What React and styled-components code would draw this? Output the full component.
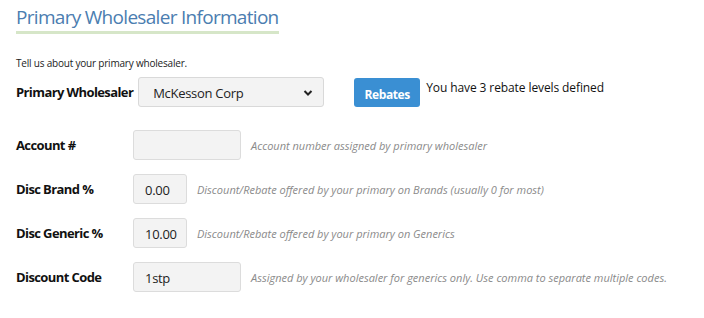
import React, { useState } from "react";
import styled, { createGlobalStyle } from "styled-components";

const GlobalStyle = createGlobalStyle`
    body {
        margin: 0;
        background: #ffffff;
        font-family: "Open Sans", "Liberation Sans", sans-serif;
        color: #111;
    }
`;

const Wrapper = styled.div`
    padding: 4px 16px 0 16px;
    width: 704px;
    height: 318px;
    box-sizing: border-box;
    display: flex;
    flex-direction: column;
`;

const TitleText = styled.h2`
    margin: 0;
    align-self: flex-start;
    font-family: "Open Sans", sans-serif;
    font-size: 19px;
    letter-spacing: -0.7px;
    font-weight: 400;
    color: #4b7db0;
    line-height: 26px;
    padding-bottom: 1px;
    border-bottom: 3px solid #d6e6c8;
`;

const IntroText = styled.p`
    margin: 22px 0 0 0;
    font-size: 10px;
    letter-spacing: -0.2px;
    line-height: 14px;
    color: #222;
`;

const TopRow = styled.div`
    margin-top: 7px;
    display: flex;
    align-items: center;
    height: 30px;
`;

const Label = styled.label`
    font-size: 13px;
    letter-spacing: -0.6px;
    font-weight: 700;
    color: #111;
    width: ${(props) => (props.inline ? "auto" : "117px")};
    margin-right: ${(props) => (props.inline ? "5px" : "0")};
    flex-shrink: 0;
`;

const SelectBox = styled.div`
    width: 186px;
    height: 30px;
    box-sizing: border-box;
    border: 1px solid #d9d9d9;
    border-radius: 3px;
    background: #f3f3f3;
    display: flex;
    align-items: center;
    justify-content: space-between;
    padding: 1px 10px 0 14px;
    font-size: 13px;
    letter-spacing: -0.3px;
    color: #222;
`;

const RebateButton = styled.button`
    margin-left: 30px;
    height: 29px;
    width: 66px;
    border: none;
    border-radius: 3px;
    background: #3a8fd3;
    color: #fff;
    font-family: "Open Sans", "Liberation Sans", sans-serif;
    font-size: 12px;
    letter-spacing: -0.4px;
    font-weight: 700;
    padding: 4px 0 0 0;
`;

const RebateNote = styled.span`
    margin-left: 6px;
    font-size: 12px;
    letter-spacing: -0.1px;
    color: #111;
    align-self: flex-start;
    margin-top: 2px;
`;

const Fields = styled.div`
    margin-top: 23px;
    display: flex;
    flex-direction: column;
    gap: 14px;
`;

const FieldRow = styled.div`
    display: flex;
    align-items: center;
    height: 30px;
`;

const Input = styled.input`
    width: ${(props) => props.width}px;
    height: 30px;
    box-sizing: border-box;
    border: 1px solid #dcdcdc;
    border-radius: 3px;
    background: #f3f3f3;
    padding: 2px 0 0 11px;
    font-family: "Open Sans", "Liberation Sans", sans-serif;
    font-size: 13px;
    letter-spacing: -0.3px;
    color: #222;
    outline: none;
`;

const Hint = styled.span`
    margin-left: 10px;
    font-size: 11px;
    font-style: italic;
    color: #8a8a8a;
`;

function Chevron() {
    return (
        <svg width="10" height="8" viewBox="0 0 10 8">
            <path d="M1.5 2 L5 5.5 L8.5 2" fill="none" stroke="#222" strokeWidth="2" />
        </svg>
    );
}

const fields = [
    { label: "Account #", value: "", width: 108, hint: "Account number assigned by primary wholesaler" },
    { label: "Disc Brand %", value: "0.00", width: 54, hint: "Discount/Rebate offered by your primary on Brands (usually 0 for most)" },
    { label: "Disc Generic %", value: "10.00", width: 54, hint: "Discount/Rebate offered by your primary on Generics" },
    { label: "Discount Code", value: "1stp", width: 108, hint: "Assigned by your wholesaler for generics only. Use comma to separate multiple codes." },
];

function App() {
    const [values, setValues] = useState(fields.map((f) => f.value));

    return (
        <Wrapper>
            <GlobalStyle />
            <TitleText>Primary Wholesaler Information</TitleText>
            <IntroText>Tell us about your primary wholesaler.</IntroText>
            <TopRow>
                <Label inline>Primary Wholesaler</Label>
                <SelectBox>
                    <span>McKesson Corp</span>
                    <Chevron />
                </SelectBox>
                <RebateButton>Rebates</RebateButton>
                <RebateNote>You have 3 rebate levels defined</RebateNote>
            </TopRow>
            <Fields>
                {fields.map((f, i) => (
                    <FieldRow key={f.label}>
                        <Label>{f.label}</Label>
                        <Input
                            width={f.width}
                            value={values[i]}
                            onChange={(event) => {
                                const next = [...values];
                                next[i] = event.target.value;
                                setValues(next);
                            }}
                        />
                        <Hint>{f.hint}</Hint>
                    </FieldRow>
                ))}
            </Fields>
        </Wrapper>
    );
}

export default App;
